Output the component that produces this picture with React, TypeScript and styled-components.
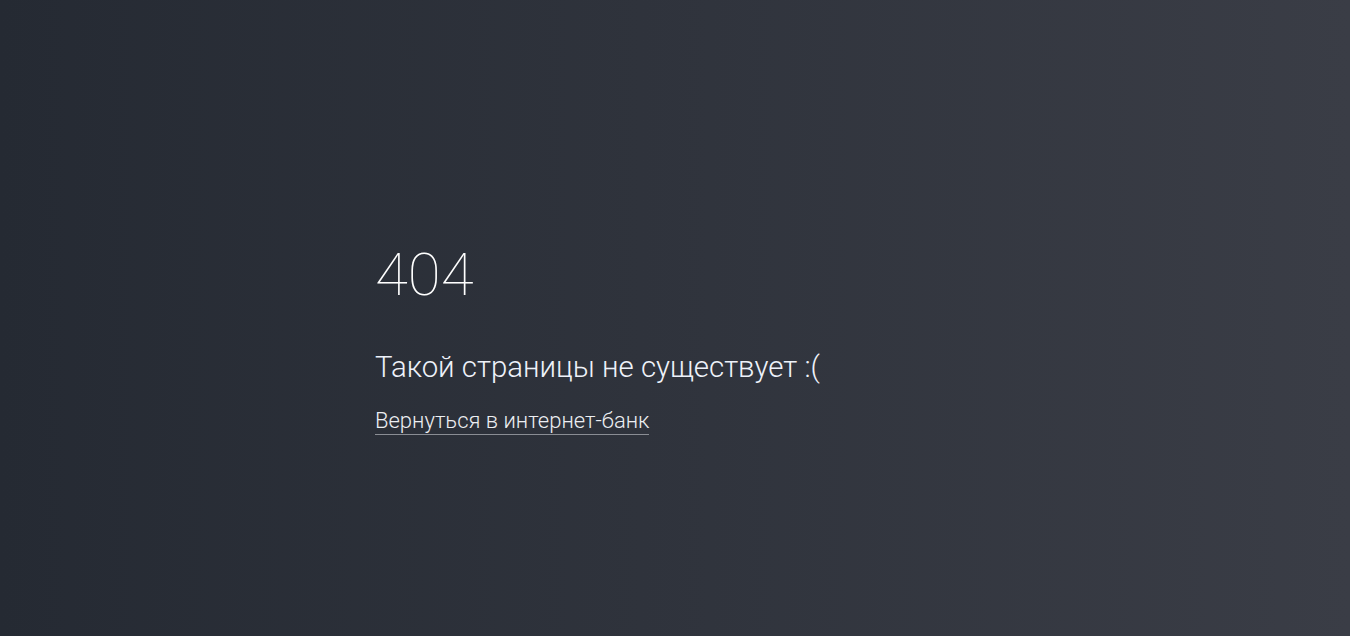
import React from "react";
import styled, { createGlobalStyle } from "styled-components";

const GlobalStyle = createGlobalStyle`
  html, body, #root {
    margin: 0;
    height: 100%;
  }
  body {
    font-family: Roboto, "Liberation Sans", sans-serif;
  }
`;

const Page = styled.div`
  min-height: 100%;
  display: flex;
  align-items: center;
  justify-content: center;
  background: linear-gradient(90deg, #252a33 0%, #3a3d46 100%);
  padding-top: 44px;
  box-sizing: border-box;
`;

const Content = styled.div`
  width: 600px;
`;

const Code = styled.h1`
  margin: 0;
  font-size: 60px;
  font-weight: 100;
  line-height: 59px;
  color: #ffffff;
`;

const Message = styled.p`
  margin: 46px 0 0;
  font-size: 29.4px;
  font-weight: 300;
  line-height: 1.2;
  color: #eef2fa;
`;

const BackLink = styled.a`
  display: inline-block;
  margin-top: 23px;
  font-size: 22px;
  font-weight: 300;
  line-height: 1.2;
  color: #eceef2;
  text-decoration: none;
  border-bottom: 1px solid #8a8d94;
  cursor: pointer;
`;

export default function App() {
  return (
    <>
      <GlobalStyle />
      <Page>
        <Content>
          <Code>404</Code>
          <Message>Такой страницы не существует :(</Message>
          <BackLink href="#">Вернуться в интернет-банк</BackLink>
        </Content>
      </Page>
    </>
  );
}
